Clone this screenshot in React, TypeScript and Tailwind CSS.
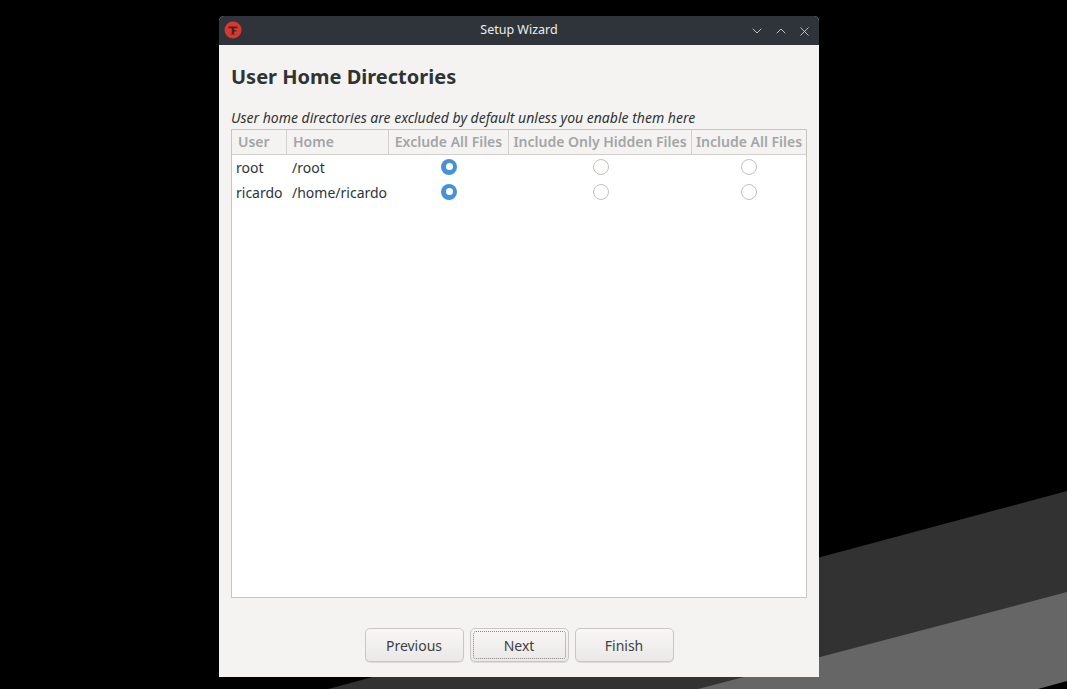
import { ChevronDown, ChevronUp, X } from 'lucide-react';

const columns = [
  { label: 'User', width: 'w-[55px]', align: 'pl-[6px] text-left' },
  { label: 'Home', width: 'w-[102px]', align: 'pl-[6px] text-left' },
  { label: 'Exclude All Files', width: 'w-[120px]', align: 'text-center' },
  { label: 'Include Only Hidden Files', width: 'w-[183px]', align: 'text-center' },
  { label: 'Include All Files', width: 'flex-1', align: 'text-center' },
];

const users = [
  { name: 'root', home: '/root' },
  { name: 'ricardo', home: '/home/ricardo' },
];

const Radio = ({ checked }: { checked?: boolean }) =>
  checked ? (
    <span className="flex h-4 w-4 items-center justify-center rounded-full bg-[#4a90d9]">
      <span className="h-[7px] w-[7px] rounded-full bg-white" />
    </span>
  ) : (
    <span className="block h-4 w-4 rounded-full border border-[#c4c1bd] bg-white" />
  );

const WizardButton = ({ label, focused }: { label: string; focused?: boolean }) => (
  <button className="h-[34px] w-[99px] rounded-[5px] border border-[#c9c6c2] bg-gradient-to-b from-[#f8f7f6] to-[#ebe9e7] p-[2px] text-[14px] text-[#3d4145] shadow-[0_1px_0_#dedbd8]">
    <span className={`flex h-full w-full items-center justify-center rounded-[3px] ${focused ? 'border border-dotted border-[#8a8886]' : ''}`}>
      {label}
    </span>
  </button>
);

export default function App() {
  return (
    <div className="relative h-[689px] w-[1067px] overflow-hidden bg-black font-['Noto_Sans',sans-serif]">
      {/* wallpaper */}
      <svg className="absolute inset-0" width="1067" height="689" viewBox="0 0 1067 689">
        <polygon points="328,689 1067,491 1067,689" fill="#323232" />
        <polygon points="698,689 1067,592 1067,689" fill="#666666" />
        <polygon points="1038,689 1067,681 1067,689" fill="#000000" />
      </svg>

      <div className="relative ml-[219px] pt-4">
        <div className="flex h-[661px] w-[600px] flex-col overflow-hidden rounded-t-[5px] bg-[#f5f3f1]">
          <div className="relative flex h-[29px] items-center justify-center bg-[#2f343a] text-[12.5px] text-[#eceeef]">
            <svg className="absolute left-[5px] top-[5px]" width="18" height="18" viewBox="0 0 18 18">
              <circle cx="9" cy="9" r="8.5" fill="#d8392f" />
              <path d="M4.5 5.5h9v1.8h-3.4v1.6h2.2v1.5h-2.2v2.2l1.2 1h-5l1.4-1V7.3H4.5z" fill="#4a2522" />
            </svg>
            Setup Wizard
            <div className="absolute right-[7px] top-[7px] flex items-center gap-[8px] text-[#d8dadc]">
              <ChevronDown size={16} strokeWidth={1.3} />
              <ChevronUp size={16} strokeWidth={1.3} />
              <X size={15} strokeWidth={1.3} />
            </div>
          </div>

          <div className="flex flex-1 flex-col px-3">
            <h1 className="mt-[17px] h-[30px] text-[20px] font-bold leading-[30px] text-[#2e3436]">User Home Directories</h1>
            <p className="mt-[15px] h-[22px] text-[14px] italic leading-[22px] text-[#2e3436]">
              User home directories are excluded by default unless you enable them here
            </p>
            <div className="h-[469px] w-[576px] border border-[#c9c6c2] bg-white text-[14px] text-[#2e3436]">
              <div className="flex h-[25px] border-b border-[#d3d0cc] bg-[#f5f3f1] font-semibold leading-[23px] text-[#a3a5a6]">
                {columns.map((col, i) => (
                  <div
                    key={col.label}
                    className={`${col.width} ${col.align} ${i < columns.length - 1 ? 'border-r border-[#d3d0cc]' : ''} whitespace-nowrap`}
                  >
                    {col.label}
                  </div>
                ))}
              </div>
              {users.map((user) => (
                <div key={user.name} className="flex h-[25px] items-center">
                  <div className="w-[55px] pl-1">{user.name}</div>
                  <div className="w-[102px] pl-[5px]">{user.home}</div>
                  <div className="flex w-[120px] justify-center pb-[2px]"><Radio checked /></div>
                  <div className="flex w-[183px] justify-center pb-[2px]"><Radio /></div>
                  <div className="flex flex-1 justify-center pb-[2px]"><Radio /></div>
                </div>
              ))}
            </div>
            <div className="mt-[30px] flex justify-center gap-[6px]">
              <WizardButton label="Previous" />
              <WizardButton label="Next" focused />
              <WizardButton label="Finish" />
            </div>
          </div>
        </div>
      </div>
    </div>
  );
}
